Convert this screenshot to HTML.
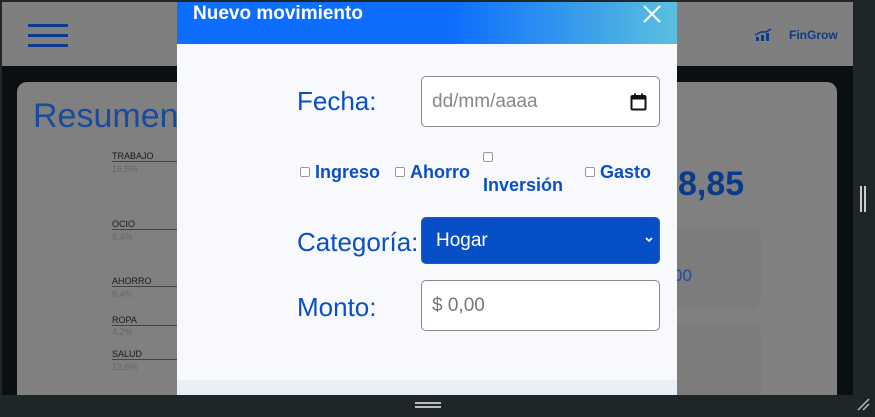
<!DOCTYPE html>
<html><head><style>
*{box-sizing:border-box;margin:0;padding:0}
body{width:875px;height:417px;overflow:hidden;background:#1e2628;font-family:"Liberation Sans",sans-serif;position:relative}
.vp{position:absolute;left:2px;top:2px;width:851px;height:393px;background:#0a0f12;overflow:hidden}
.hdr{position:absolute;left:0;top:0;width:851px;height:64px;background:#7f7f7f}
.ham{position:absolute;left:26px;width:40px;height:3px;background:#0a3a8c}
.card{position:absolute;left:15px;top:80px;width:820px;height:330px;background:#808080;border-radius:10px}
.lbl{position:absolute;font-size:9px;color:#1a1a1a;border-bottom:1px solid #444;width:70px}
.pct{position:absolute;font-size:9px;color:#666}
.modal{position:absolute;left:175px;top:0;width:500px;height:393px;background:#f8f9fc}
.mh{height:42px;background:linear-gradient(90deg,#0d6efd 0%,#0d6efd 55%,#5bc0de 100%);color:#fff;font-weight:bold;font-size:19px;padding:1px 16px;position:relative}
.f{position:absolute;color:#0b4fc6;font-size:26px}
.inp{position:absolute;left:244px;width:239px;background:#fff;border:1px solid #888;border-radius:5px;font-size:19px;color:#888;padding-left:10px}
.cb{position:absolute;font-size:18px;font-weight:bold;color:#0b4fc6}
.cb i{display:inline-block;width:10px;height:10px;border:1px solid #999;border-radius:2px;background:#fff;margin-right:5px;vertical-align:1px}
</style></head><body>
<div class="vp">
 <div class="hdr">
  <div class="ham" style="top:22px"></div><div class="ham" style="top:32px"></div><div class="ham" style="top:42px"></div>
  <svg style="position:absolute;left:752px;top:26px" width="20" height="14" viewBox="0 0 20 14"><rect x="2" y="9" width="3" height="4" fill="#0a3a8c"/><rect x="7" y="7" width="3" height="6" fill="#0a3a8c"/><rect x="12" y="5" width="3" height="8" fill="#0a3a8c"/><path d="M1 7 L7 4 L12 4 L17 1" stroke="#0a3a8c" stroke-width="1.5" fill="none"/></svg>
  <div style="position:absolute;left:787px;top:26px;font-size:12px;font-weight:bold;color:#0a3a8c">FinGrow</div>
 </div>
 <div class="card">
  <div style="position:absolute;left:16px;top:15px;font-size:34px;color:#1a4a9c">Resumen f</div>
  <div style="position:absolute;left:661px;top:83px;font-size:34px;font-weight:bold;color:#0a3a8c">8,85</div>
  <div style="position:absolute;left:560px;top:146px;width:184px;height:80px;background:#7c7c7c;border-radius:10px"></div>
  <div style="position:absolute;left:656px;top:184px;font-size:17px;color:#1a4a9c">00</div>
  <div style="position:absolute;left:560px;top:242px;width:184px;height:90px;background:#7c7c7c;border-radius:10px"></div>
  <div class="lbl" style="left:95px;top:69px">TRABAJO</div><div class="pct" style="left:95px;top:82px">16,8%</div>
  <div class="lbl" style="left:95px;top:137px">OCIO</div><div class="pct" style="left:95px;top:150px">8,4%</div>
  <div class="lbl" style="left:95px;top:194px">AHORRO</div><div class="pct" style="left:95px;top:207px">8,4%</div>
  <div class="lbl" style="left:95px;top:233px">ROPA</div><div class="pct" style="left:95px;top:245px">4,2%</div>
  <div class="lbl" style="left:95px;top:267px">SALUD</div><div class="pct" style="left:95px;top:280px">12,6%</div>
 </div>
 <div class="modal">
  <div class="mh">Nuevo movimiento<svg style="position:absolute;right:16px;top:3px" width="18" height="18"><path d="M1 1 L17 17 M17 1 L1 17" stroke="#fff" stroke-width="2"/></svg></div>
  <div class="f" style="left:120px;top:84px">Fecha:</div>
  <div class="inp" style="top:74px;height:51px;line-height:49px">dd/mm/aaaa
   <svg style="position:absolute;right:12px;top:16px" width="17" height="18" viewBox="0 0 17 18"><rect x="1.5" y="3" width="14" height="13.5" rx="1" fill="none" stroke="#111" stroke-width="2"/><rect x="1.5" y="3" width="14" height="3.5" fill="#111"/><rect x="4" y="0.5" width="2" height="3" fill="#111"/><rect x="11" y="0.5" width="2" height="3" fill="#111"/></svg></div>
  <div class="cb" style="left:123px;top:160px"><i></i>Ingreso</div>
  <div class="cb" style="left:218px;top:160px"><i></i>Ahorro</div>
  <div class="cb" style="left:306px;top:150px"><i style="display:block;margin-bottom:13px"></i>Inversión</div>
  <div class="cb" style="left:408px;top:160px"><i></i>Gasto</div>
  <div class="f" style="left:120px;top:225px">Categoría:</div>
  <div style="position:absolute;left:244px;top:215px;width:239px;height:47px;background:#064fc7;border-radius:5px;border:1px solid #555;color:#fff;font-size:19px;line-height:45px;padding-left:14px">Hogar<svg style="position:absolute;right:6px;top:19px" width="8" height="6"><path d="M1 1 L4 4 L7 1" stroke="#fff" stroke-width="1.6" fill="none"/></svg></div>
  <div class="f" style="left:120px;top:290px">Monto:</div>
  <div class="inp" style="top:278px;height:51px;line-height:49px;color:#777">$ 0,00</div>
  <div style="position:absolute;left:0;top:378px;width:500px;height:15px;background:#e9eff7"></div>
 </div>
</div>
<div style="position:absolute;left:415px;top:402px;width:26px;height:2px;background:#bbb"></div>
<div style="position:absolute;left:415px;top:406px;width:26px;height:2px;background:#bbb"></div>
<div style="position:absolute;left:860px;top:186px;width:2px;height:26px;background:#ccc"></div>
<div style="position:absolute;left:864px;top:186px;width:2px;height:26px;background:#ccc"></div>
<svg style="position:absolute;left:856px;top:397px" width="14" height="14"><path d="M2 13 L13 2 M7 13 L13 7" stroke="#bbb" stroke-width="1.5"/></svg>
</body></html>
